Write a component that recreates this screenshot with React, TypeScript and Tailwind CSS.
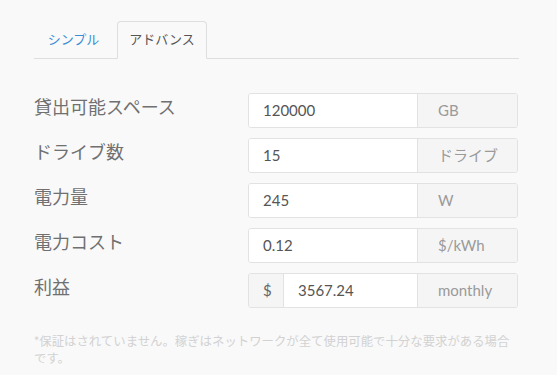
const font = {
  fontFamily: '"Lato", "Noto Sans CJK JP", sans-serif',
};

type Row = {
  label: string;
  value: string;
  unit: string;
  prefix?: string;
};

const rows: Row[] = [
  { label: "貸出可能スペース", value: "120000", unit: "GB" },
  { label: "ドライブ数", value: "15", unit: "ドライブ" },
  { label: "電力量", value: "245", unit: "W" },
  { label: "電力コスト", value: "0.12", unit: "$/kWh" },
  { label: "利益", value: "3567.24", unit: "monthly", prefix: "$" },
];

function Tabs() {
  return (
    <div className="flex items-end border-b border-[#dedede] h-[38px]">
      <div className="w-[79px] h-[37px] flex items-center justify-center text-[13px] text-[#3b8dd6] mr-[4px]">
        シンプル
      </div>
      <div className="w-[90px] h-[38px] -mb-px flex items-center justify-center text-[13px] text-[#555] bg-[#f9f9f9] border border-[#dedede] border-b-[#f9f9f9] rounded-t-[4px]">
        アドバンス
      </div>
    </div>
  );
}

function InputRow({ row }: { row: Row }) {
  return (
    <div className="flex items-center h-[35px]">
      <div className="w-[214px] text-[18px] text-[#707070] pb-[6px]">
        {row.label}
      </div>
      <div className="flex w-[270px] h-[35px] border border-[#e2e2e2] rounded-[3px] overflow-hidden">
        {row.prefix && (
          <div className="w-[35px] flex items-center pl-[14px] bg-[#f5f5f5] border-r border-[#e2e2e2] text-[15px] text-[#666]">
            {row.prefix}
          </div>
        )}
        <div className="flex-1 flex items-center bg-white pl-[14px] text-[15px] text-[#555]">
          {row.value}
        </div>
        <div className="w-[100px] flex items-center pl-[20px] bg-[#f5f5f5] border-l border-[#e2e2e2] text-[15px] text-[#9a9a9a]">
          {row.unit}
        </div>
      </div>
    </div>
  );
}

export default function App() {
  return (
    <div className="w-[557px] h-[375px] bg-[#f9f9f9] pt-[21px] px-[34px]" style={font}>
      <div className="w-[485px]">
        <Tabs />
        <div className="flex flex-col gap-[10px] mt-[34px]">
          {rows.map((r) => (
            <InputRow key={r.label} row={r} />
          ))}
        </div>
        <p className="w-[486px] mt-[25px] text-[12.4px] leading-[17px] text-[#d2d2d2]">
          *保証はされていません。稼ぎはネットワークが全て使用可能で十分な要求がある場合です。
        </p>
      </div>
    </div>
  );
}
